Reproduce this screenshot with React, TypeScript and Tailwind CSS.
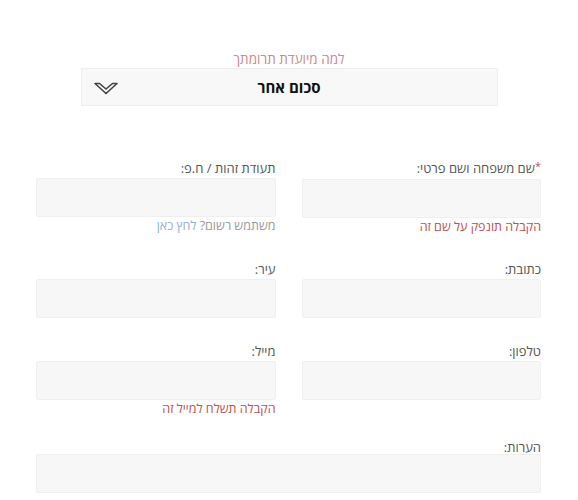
import React from 'react';

interface FieldProps {
  label: string;
  required?: boolean;
  helper?: React.ReactNode;
  tight?: boolean;
}

function Field({ label, required, helper, tight }: FieldProps) {
  return (
    <div className="flex flex-col">
      <label className="text-[13px] leading-4 text-[#555555]">
        {required && <span className="relative -top-[3px] text-[11px] text-[#c0504d]">*</span>}
        {label}
      </label>
      <div
        className={
          tight
            ? '-mt-px h-[39px] w-full rounded-[2px] border border-[#efefef] bg-[#f7f7f7]'
            : 'mt-[2px] h-[39px] w-full rounded-[2px] border border-[#efefef] bg-[#f7f7f7]'
        }
      />
      {helper && <div className="mt-px text-[12.5px] leading-4">{helper}</div>}
    </div>
  );
}

function ChevronIcon() {
  return (
    <svg width="24" height="13" viewBox="0 0 24 13" fill="none">
      <path
        d="M1 1.5 H5.5 L12 7 L18.5 1.5 H23 L12 11.5 Z"
        stroke="#444444"
        strokeWidth="1.6"
        strokeLinejoin="round"
      />
    </svg>
  );
}

export default function App() {
  return (
    <div
      dir="rtl"
      className="min-h-[500px] w-[578px] bg-white pt-[51px]"
      style={{ fontFamily: '"Open Sans", "DejaVu Sans", "Liberation Sans", sans-serif' }}
    >
      {/* Donation target */}
      <p className="text-center text-[13.5px] leading-4 text-[#c98a8a]">למה מיועדת תרומתך</p>
      <div className="relative mx-auto mt-px flex h-[38px] w-[417px] items-center justify-center border border-[#eeeeee] bg-[#f8f8f8]">
        <span className="text-[15px] font-bold text-[#111111]">סכום אחר</span>
        <span className="absolute left-[12px] top-[13px]">
          <ChevronIcon />
        </span>
      </div>

      {/* Form */}
      <div className="ml-[36px] mr-[37px] mt-[54px] flex flex-col">
        <div className="grid grid-cols-2 gap-x-[26px]">
          <Field
            label="שם משפחה ושם פרטי:"
            required
            helper={<span className="text-[#c0504d]">הקבלה תונפק על שם זה</span>}
          />
          <Field
            label="תעודת זהות / ח.פ:"
            helper={
              <span className="text-[#999999]">
                משתמש רשום? <span className="text-[#8fb0e0]">לחץ כאן</span>
              </span>
            }
          />
        </div>
        <div className="mt-[26px] grid grid-cols-2 gap-x-[26px]">
          <Field label="כתובת:" />
          <Field label="עיר:" />
        </div>
        <div className="mt-[25px] grid grid-cols-2 gap-x-[26px]">
          <Field label="טלפון:" />
          <Field
            label="מייל:"
            helper={<span className="text-[#c0504d]">הקבלה תשלח למייל זה</span>}
          />
        </div>
        <div className="mt-[22px]">
          <Field label="הערות:" tight />
        </div>
      </div>
    </div>
  );
}
